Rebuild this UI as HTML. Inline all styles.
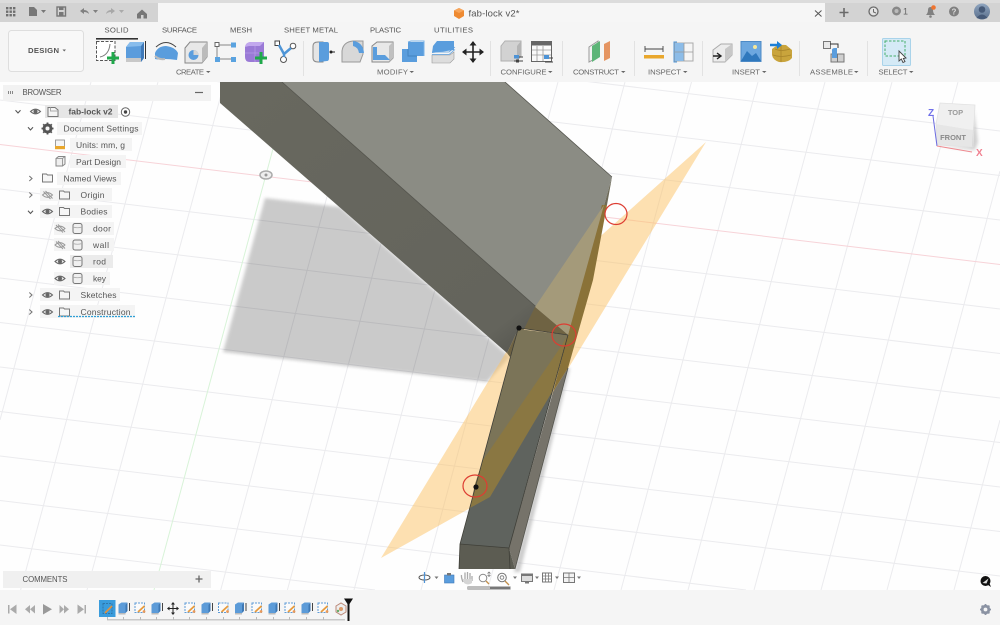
<!DOCTYPE html>
<html><head><meta charset="utf-8"><title>fab-lock v2</title>
<style>
html,body{margin:0;padding:0;width:1000px;height:625px;overflow:hidden;background:#fff}
svg{display:block;filter:blur(.3px)}
text{font-family:"Liberation Sans",sans-serif;fill:#5a5a5a}
.tab{font-size:7.7px;fill:#555}
.lab{font-size:7.7px;fill:#666}
.tr{font-size:8.5px;fill:#555}
.g line{stroke:#ebebee;stroke-width:1}
</style></head><body>
<svg width="1000" height="625" viewBox="0 0 1000 625" xmlns="http://www.w3.org/2000/svg">
<defs>
<filter id="b1" x="-10%" y="-10%" width="120%" height="120%"><feGaussianBlur stdDeviation="1.6"/></filter>
<filter id="b2" x="-10%" y="-10%" width="120%" height="120%"><feGaussianBlur stdDeviation="2.5"/></filter>
<linearGradient id="dk" x1="0" y1="0" x2="1" y2="1"><stop offset="0" stop-color="#68685f"/><stop offset=".85" stop-color="#64645c"/><stop offset="1" stop-color="#4a4a46"/></linearGradient>
<linearGradient id="av" x1="0" y1="0" x2="0" y2="1"><stop offset="0" stop-color="#8fa5c0"/><stop offset="1" stop-color="#5b708c"/></linearGradient>
<g id="eye"><path d="M-5 0Q0 -4.6 5 0Q0 4.6 -5 0Z" fill="#eee" stroke="#666" stroke-width="1.1"/><circle r="2" fill="#666"/></g>
<g id="eyeoff"><path d="M-5 0Q0 -4.6 5 0Q0 4.6 -5 0Z" fill="none" stroke="#999" stroke-width="1"/><path d="M-4 -3.5L3 4M-2 -4L5 3.5" stroke="#999" stroke-width="1" fill="none"/></g>
<g id="fold"><path d="M-5 -4H-1L0 -3H5V4H-5Z" fill="#f6f6f6" stroke="#777" stroke-width="1"/></g>
<g id="body"><rect x="-4.5" y="-5" width="9" height="10" rx="2" fill="#f0f0f0" stroke="#777" stroke-width="1"/><path d="M-4.500 -1.500Q0 0 4.500 -1.500" stroke="#aaa" fill="none" stroke-width=".8"/></g>
<path id="car" d="M-2.500 -1.200L0 1.500L2.500 -1.200" fill="none" stroke="#555" stroke-width="1.100"/>
<path id="cal" d="M-1.200 -2.500L1.500 0L-1.200 2.500" fill="none" stroke="#777" stroke-width="1.100"/>
<g id="tsk"><rect x="-5" y="-5" width="9.500" height="9.500" fill="#fafafa" stroke="#5d9bd6" stroke-width="1" stroke-dasharray="2 1"/><path d="M-2 4L4.500 -2" stroke="#e79a3c" stroke-width="1.800"/><circle cx="4" cy="3.500" r="1.400" fill="#e95"/></g>
<g id="tex"><path d="M-5 -3.500L-2 -5.500H4L2 -3.500V5H-5Z" fill="#5c9bd8"/><path d="M2 -3.500L4 -5.500V3L2 5Z" fill="#3e79b5"/><path d="M-5 5H2V6.500H-5Z" fill="#bbb"/><path d="M6 -5V3" stroke="#444" stroke-width="1"/></g>
</defs>

<!-- viewport background -->
<rect width="1000" height="625" fill="#fefefe"/>
<g class="g">
<line x1="0" y1="11" x2="1000" y2="131"/><line x1="0" y1="55.500" x2="1000" y2="175.500"/><line x1="0" y1="100" x2="1000" y2="220"/>
<line x1="0" y1="189" x2="1000" y2="309"/><line x1="0" y1="233.500" x2="1000" y2="353.500"/><line x1="0" y1="278" x2="1000" y2="398"/>
<line x1="0" y1="322.500" x2="1000" y2="442.500"/><line x1="0" y1="367" x2="1000" y2="487"/><line x1="0" y1="411.500" x2="1000" y2="531.500"/>
<line x1="0" y1="456" x2="1000" y2="576"/><line x1="0" y1="500.500" x2="746" y2="590"/><line x1="0" y1="545" x2="375" y2="590"/>
<line x1="0" y1="420" x2="91" y2="82"/><line x1="20.600" y1="590" x2="158" y2="82"/><line x1="87" y1="590" x2="224.500" y2="82"/>
<line x1="220.700" y1="590" x2="358" y2="82"/><line x1="287.400" y1="590" x2="424.600" y2="82"/><line x1="354" y1="590" x2="491" y2="82"/>
<line x1="421" y1="590" x2="558" y2="82"/><line x1="487.500" y1="590" x2="625" y2="82"/><line x1="554" y1="590" x2="691.500" y2="82"/>
<line x1="621" y1="590" x2="758" y2="82"/><line x1="688" y1="590" x2="825" y2="82"/><line x1="754" y1="590" x2="892" y2="82"/>
<line x1="821" y1="590" x2="958" y2="82"/><line x1="887" y1="590" x2="1000" y2="171"/><line x1="954" y1="590" x2="1000" y2="420"/>
</g>
<line x1="0" y1="144.500" x2="1000" y2="264.500" stroke="#f7d3d8" stroke-width="1"/>
<line x1="154" y1="590" x2="291" y2="82" stroke="#d8f3d8" stroke-width="1"/>

<!-- shadow of door -->
<path d="M265 198L340 207L510 357L487 382L223 352Z" fill="#000" opacity=".2" filter="url(#b1)"/>
<!-- origin -->
<ellipse cx="266" cy="175" rx="6" ry="4" fill="#eee" stroke="#aaa" stroke-width="1.500"/>
<circle cx="266" cy="175" r="1.500" fill="#999"/>

<!-- rod shadow -->
<path d="M570 368L520 572L514 572L566 368Z" fill="#999" opacity=".5" filter="url(#b1)"/>
<!-- orange plane -->
<path d="M706 142L548 283L381 558L490 497Z" fill="#fbc469" opacity=".52"/>

<!-- door faces -->
<path d="M282 82H505L612 177L568 335Z" fill="#8b8c84"/>
<path d="M220 82H282L568 335L519 328L507 353L220 103Z" fill="url(#dk)"/>
<path d="M282 82L568 335M505 82L612 177" stroke="#55554e" stroke-width=".8" fill="none"/>
<!-- door side strip -->
<path d="M612 177L607 205L602 205L568 335Z" fill="#6d6a58"/>
<path d="M602 205L607 205L593 280L568 368L553 392L568 335Z" fill="#8a7238"/>
<!-- plane tint over door top / dark face -->
<path d="M604 205L568 335L535 307Z" fill="#a49a7a"/>
<path d="M535 307L568 335L519 328L507 353L510 357Z" fill="#6f6343"/>

<!-- rod -->
<path d="M518 329L568 335L509 548L460 544Z" fill="#7b7458"/>
<path d="M568 335L552 392L490 497L470 508L475 484L483 460L560 348Z" fill="#8a7742"/>
<path d="M470 508L490 497L552 392L509 548L460 544Z" fill="#5f635e"/>
<path d="M553 392L568 368L515 569L509 548Z" fill="#76736a"/>
<path d="M460 544L509 548L515 569H459Z" fill="#5c5c52"/>
<path d="M518 329L460 544L459 569M509 548L568 335M460 544L509 548L510 569M519 328L568 335" stroke="#3f3f38" stroke-width=".8" fill="none"/>
<path d="M568 368L515 569" stroke="#55554e" stroke-width=".8" fill="none"/>

<!-- markers -->
<ellipse cx="616" cy="214" rx="11" ry="10.500" fill="none" stroke="#dd3d32" stroke-width="1.200"/>
<ellipse cx="564" cy="335" rx="12" ry="11" fill="none" stroke="#dd3d32" stroke-width="1.200"/>
<ellipse cx="475" cy="486" rx="12" ry="11" fill="none" stroke="#dd3d32" stroke-width="1.200"/>
<circle cx="519" cy="328" r="2.600" fill="#111"/>
<circle cx="476" cy="487" r="2.600" fill="#111"/>

<!-- viewcube -->
<path d="M939 146L975 150L978 142L974 110L970 146Z" fill="#999" opacity=".45" filter="url(#b1)"/>
<path d="M940 103L975 105L973 130L936 124Z" fill="#f0f0f0"/>
<path d="M936 124L973 130L972 147L937 145Z" fill="#e6e6e6"/>
<path d="M940 103L975 105L973 147L937 145L936 124Z" fill="none" stroke="#e2e2e2" stroke-width=".8"/>
<path d="M933 116L937 146" stroke="#6a6ae0" stroke-width="1"/>
<path d="M937 146L972 152" stroke="#ee8a90" stroke-width="1"/>
<text x="955.500" y="115" font-size="7.500" font-weight="bold" text-anchor="middle" style="fill:#9a9a9a">TOP</text>
<text x="953" y="140" font-size="7.500" font-weight="bold" text-anchor="middle" style="fill:#8a8a8a">FRONT</text>
<text x="928" y="116" font-size="10" font-weight="bold" style="fill:#7070ea">Z</text>
<text x="976" y="156" font-size="10" font-weight="bold" style="fill:#f08090">X</text>

<!-- title bar -->
<rect width="1000" height="22" fill="#d3d3d3"/>
<rect width="1000" height="3" fill="#dcdcdc"/>
<rect x="158" y="3" width="667" height="20" fill="#f6f6f6"/>
<rect y="22" width="1000" height="60" fill="#f5f5f5"/>
<!-- top-left icons -->
<g fill="#6f6f6f"><rect x="6" y="7" width="2.400" height="2.400"/><rect x="9.500" y="7" width="2.400" height="2.400"/><rect x="13" y="7" width="2.400" height="2.400"/><rect x="6" y="10.500" width="2.400" height="2.400"/><rect x="9.500" y="10.500" width="2.400" height="2.400"/><rect x="13" y="10.500" width="2.400" height="2.400"/><rect x="6" y="14" width="2.400" height="2.400"/><rect x="9.500" y="14" width="2.400" height="2.400"/><rect x="13" y="14" width="2.400" height="2.400"/></g>
<path d="M29 7H34L37 10V16H29Z" fill="#777"/>
<path d="M41 10H46L43.500 13Z" fill="#777"/>
<rect x="57" y="7" width="8.500" height="9" fill="none" stroke="#777" stroke-width="1.400"/><rect x="59" y="7" width="4.500" height="3" fill="#777"/><rect x="59" y="12" width="4.500" height="3.500" fill="#777"/>
<path d="M80 11L84 8V10Q88 10 89 14Q87 12 84 12V14Z" fill="#808080"/>
<path d="M93 10H98L95.500 13Z" fill="#808080"/>
<path d="M115 11L111 8V10Q107 10 106 14Q108 12 111 12V14Z" fill="#a8a8a8"/>
<path d="M119 10H124L121.500 13Z" fill="#aaa"/>
<path d="M137 14L142 9.500L147 14V18.500H137Z" fill="#767676"/>
<rect x="141" y="15" width="2.500" height="3.500" fill="#d3d3d3"/>
<!-- doc tab -->
<path d="M459 8L464 10.500V16L459 19L454 16V10.500Z" fill="#ee8a32"/>
<path d="M459 8L464 10.500L459 13L454 10.500Z" fill="#f7a55a"/>
<text x="468.500" y="16.500" font-size="9.500" textLength="51" style="fill:#555">fab-lock v2*</text>
<path d="M815 10.500L821.500 16.500M821.500 10.500L815 16.500" stroke="#555" stroke-width="1"/>
<!-- right icons -->
<path d="M844 8V17M839.500 12.500H848.500" stroke="#6a6a6a" stroke-width="1.600"/>
<circle cx="873.500" cy="11.500" r="4.500" fill="#e4e4e4" stroke="#6a6a6a" stroke-width="1.300"/><path d="M873.500 9V12L876 13" stroke="#6a6a6a" stroke-width="1" fill="none"/>
<circle cx="896.500" cy="11" r="4.500" fill="#888"/><circle cx="896.500" cy="11" r="2" fill="#bbb"/>
<text x="903" y="14.500" font-size="9" style="fill:#666">1</text>
<path d="M926 15Q928 13 928 10Q928 7 930.500 7Q933 7 933 10Q933 13 935 15Z" fill="#808080"/><circle cx="930.500" cy="16.500" r="1.300" fill="#808080"/><circle cx="933.500" cy="7.500" r="2.300" fill="#ee7430"/>
<circle cx="954" cy="11.500" r="5" fill="#808080"/><text x="954" y="14.500" font-size="8" font-weight="bold" text-anchor="middle" style="fill:#ddd">?</text>
<circle cx="982" cy="11.500" r="8" fill="url(#av)"/><circle cx="982" cy="9.500" r="3.300" fill="#465a78"/><path d="M976.500 18Q982 11 987.500 18Q982 20 976.500 18Z" fill="#465a78"/>

<!-- toolbar -->
<rect x="8.500" y="30.500" width="75" height="41" rx="3" fill="#f8f8f8" stroke="#dedede"/>
<text x="28" y="53" font-size="7.700" font-weight="bold" textLength="31" style="fill:#555">DESIGN</text>
<path d="M62.500 49.500H66L64.250 51.500Z" fill="#666"/>
<text class="tab" x="104.500" y="32.500" textLength="24">SOLID</text>
<text class="tab" x="162" y="32.500" textLength="35">SURFACE</text>
<text class="tab" x="230" y="32.500" textLength="22">MESH</text>
<text class="tab" x="284" y="32.500" textLength="54">SHEET METAL</text>
<text class="tab" x="370" y="32.500" textLength="31">PLASTIC</text>
<text class="tab" x="434" y="32.500" textLength="39">UTILITIES</text>
<rect x="96" y="38" width="42" height="1.600" fill="#333"/>
<g stroke="#e2e2e2" stroke-width="1"><line x1="303.500" y1="41" x2="303.500" y2="76"/><line x1="490.500" y1="41" x2="490.500" y2="76"/><line x1="562.500" y1="41" x2="562.500" y2="76"/><line x1="634.500" y1="41" x2="634.500" y2="76"/><line x1="702.500" y1="41" x2="702.500" y2="76"/><line x1="799.500" y1="41" x2="799.500" y2="76"/><line x1="867.500" y1="41" x2="867.500" y2="76"/></g>
<text class="lab" x="176" y="74.500" textLength="28">CREATE</text>
<text class="lab" x="377" y="74.500" textLength="31">MODIFY</text>
<text class="lab" x="500.500" y="74.500" textLength="46">CONFIGURE</text>
<text class="lab" x="573" y="74.500" textLength="46">CONSTRUCT</text>
<text class="lab" x="648" y="74.500" textLength="33">INSPECT</text>
<text class="lab" x="732" y="74.500" textLength="28">INSERT</text>
<text class="lab" x="810" y="74.500" textLength="43">ASSEMBLE</text>
<text class="lab" x="878.500" y="74.500" textLength="29">SELECT</text>
<g fill="#666"><path d="M206 71H210.500L208.250 73Z"/><path d="M409.500 71H414L411.750 73Z"/><path d="M548 71H552.500L550.250 73Z"/><path d="M621 71H625.500L623.250 73Z"/><path d="M683 71H687.500L685.250 73Z"/><path d="M762 71H766.500L764.250 73Z"/><path d="M854 71H858.500L856.250 73Z"/><path d="M909 71H913.500L911.250 73Z"/></g>

<!-- CREATE icons -->
<rect x="96.500" y="41.500" width="18.500" height="19" fill="#fff" stroke="#555" stroke-width="1" stroke-dasharray="3 1.500"/>
<path d="M100 57Q109 55 110 44" stroke="#777" fill="none" stroke-width="1"/>
<path d="M113 52V64M107 58H119" stroke="#1fa84a" stroke-width="3"/>
<path d="M126 47L130 42H144V58L141 62H126Z" fill="#5b9cdc"/><path d="M141 46L144 42V58L141 62Z" fill="#3f79b8"/><path d="M126 47L130 42H144L141 46Z" fill="#87bcec"/><path d="M126 58H141V62H126Z" fill="#c8c8c8"/><path d="M145.500 41V59" stroke="#333" stroke-width="1"/>
<path d="M155 53Q158 46 166 46Q175 47 178 53L177 60Q170 59 165 59Q159 60 155 59Z" fill="#5a9ddd"/><path d="M156 47Q166 38 176 47" stroke="#444" fill="none" stroke-width="1"/><path d="M155 56Q159 60 165 59" stroke="#bbb" stroke-width="2" fill="none"/>
<path d="M185 48L190 42H207V57L202 63H185Z" fill="#e8e8e8" stroke="#888" stroke-width="1"/><path d="M202 48L207 42V57L202 63Z" fill="#bbb"/><circle cx="193.500" cy="55" r="5" fill="#5a9ddd"/><path d="M193.500 50A5 5 0 0 1 198.500 55L193.500 55Z" fill="#d5d5d5"/>
<path d="M219 45H231M219 59H231M217 47V57" stroke="#888" stroke-width="1"/><rect x="215" y="42.500" width="4" height="4" fill="#fff" stroke="#666"/><rect x="231" y="42.500" width="5" height="5" fill="#5aa3e0"/><rect x="215" y="57" width="5" height="5" fill="#5aa3e0"/><rect x="231" y="57" width="5" height="5" fill="#5aa3e0"/>
<path d="M245 47Q246 42 251 42H264V58L260 62H250Q245 62 245 57Z" fill="#9a7ad6"/><path d="M245 47Q246 42 251 42H264L260 46H249Z" fill="#c2a8ee"/><path d="M255 46V62M245 53H260" stroke="#b69ae6" stroke-width=".8"/><path d="M261 52V64M255 58H267" stroke="#1fa84a" stroke-width="3"/>
<rect x="275" y="41" width="4.500" height="4.500" fill="#fff" stroke="#444"/><circle cx="293" cy="46" r="2.800" fill="#fff" stroke="#555"/><circle cx="283.500" cy="59.500" r="3" fill="#fff" stroke="#555"/><path d="M279 45L284 54L291 48M284 54V57" stroke="#4f95d6" stroke-width="2.500" fill="none"/>
<!-- MODIFY icons -->
<path d="M313 46Q313 42 318 42H323V62H318Q313 62 313 58Z" fill="#e5e5e5" stroke="#888"/><path d="M319 42H327Q329 42 329 44V58Q329 61 327 61L319 62Z" fill="#5a9ddd"/><circle cx="331" cy="52" r="1.500" fill="#222"/><path d="M331 52H335" stroke="#222"/>
<path d="M342 51Q343 42 353 41H363V54L360 62H342Z" fill="#d8d8d8" stroke="#999"/><path d="M353 41Q363 42 364 53L359 53Q358 47 353 46Z" fill="#5a9ddd"/>
<path d="M372 46L377 42H393V58L389 62H372Z" fill="#e8e8e8" stroke="#888"/><path d="M389 46L393 42V58L389 62Z" fill="#c0c0c0"/><path d="M377 47V55H385L390 60H373V47Z" fill="#5a9ddd"/>
<path d="M402 49H408V42H424V56H417V62H402Z" fill="#5a9ddd"/><path d="M408 42L411 41H424V56" fill="none" stroke="#7ab3e6"/><path d="M408 49V56H417" stroke="#4382bf" fill="none"/>
<path d="M433 46L437 41H454V50L432 53Z" fill="#5a9ddd"/><path d="M432 55H450L454 52V59L450 63H432Z" fill="#ddd" stroke="#999" stroke-width=".6"/><path d="M432 52H449L455 47M432 54.500H449L455 49.500" stroke="#5a9ddd" fill="none" stroke-width=".8"/>
<path d="M473 42V62M463 52H483" stroke="#222" stroke-width="1.600"/><path d="M473 41L476.500 45.500H469.500ZM473 63L476.500 58.500H469.500ZM462 52L466.500 48.500V55.500ZM484 52L479.500 48.500V55.500Z" fill="#222"/>
<!-- CONFIGURE -->
<path d="M501 46L505 41H521V56L517 61H501Z" fill="#d2d2d2" stroke="#b0b0b0"/><path d="M517 46L521 41V56L517 61Z" fill="#b5b5b5"/>
<path d="M514 57H523M514 61H523" stroke="#444" stroke-width="1"/><rect x="514" y="55" width="5" height="3.500" fill="#4d93d6"/><rect x="516" y="59.500" width="3" height="3" fill="#444"/>
<rect x="531.500" y="41.500" width="20" height="20" fill="#fafafa" stroke="#666"/><rect x="531.500" y="41.500" width="20" height="4" fill="#666"/>
<path d="M537 46V61M543 46V61M532 50H551M532 55H551" stroke="#999" stroke-width=".8"/>
<path d="M545 58H553M545 62H553" stroke="#444"/><rect x="544" y="55" width="5" height="4" fill="#4d93d6"/>
<!-- CONSTRUCT -->
<path d="M589 47L598 41V57L589 62Z" fill="#f2f2f2" stroke="#999"/><path d="M592 46L600 41V57L592 62Z" fill="#5db578"/><path d="M604 44L610 41V58L604 61Z" fill="#e59562"/>
<!-- INSPECT -->
<rect x="644" y="55" width="20" height="3.500" fill="#e9a72c"/><path d="M645 49H663M645 46V52M663 46V52" stroke="#444" stroke-width=".9"/>
<rect x="675" y="43" width="18" height="18" fill="#f5f5f5" stroke="#aaa"/><rect x="675" y="43" width="9" height="18" fill="#8cbce8"/><path d="M684 43V61M675 52H693" stroke="#999" stroke-width=".8"/><path d="M677 42H674V62H677" stroke="#4f95d6" fill="none"/>
<!-- INSERT -->
<path d="M713 50L721 44H732V55L725 62H713Z" fill="#ececec" stroke="#aaa"/><path d="M725 49L732 44V55L725 62Z" fill="#c8c8c8"/><path d="M713 56H720M717 53L721 56L717 59" stroke="#222" stroke-width="1.400" fill="none"/>
<rect x="741" y="41.500" width="20" height="20" fill="#6ca7df" stroke="#4d8ac6"/><circle cx="755" cy="47" r="2" fill="#f5e79a"/><path d="M741 61L747 51L752 56L756 53L761 61Z" fill="#2f78bd"/>
<path d="M772 49Q777 44 786 45L792 50V58Q788 63 779 62Q773 60 772 55Z" fill="#c9a43c"/><path d="M775 49Q781 52 790 49M773 55Q781 58 791 55M781 45V62" stroke="#a8842a" fill="none" stroke-width=".8"/><path d="M770 45H778" stroke="#1c7fd6" stroke-width="2.500"/><path d="M777 41L782 45L777 49Z" fill="#1c7fd6"/>
<!-- ASSEMBLE -->
<rect x="823.500" y="41.500" width="7" height="7" fill="#e8e8e8" stroke="#777"/><path d="M830 44H838V48" stroke="#333" fill="none"/><rect x="831" y="54" width="13" height="8" fill="#cfcfcf" stroke="#777"/><path d="M837.500 54V62" stroke="#777"/><path d="M832 50Q832 48 835 48H837V58H832Z" fill="#5a9ddd"/>
<!-- SELECT -->
<rect x="882.500" y="38.500" width="28" height="27" rx="1" fill="#d5eaf6" stroke="#a9d3ea"/>
<rect x="885" y="41" width="20" height="15" fill="none" stroke="#45ad6a" stroke-width="1" stroke-dasharray="2.500 1.500"/>
<path d="M899 51L899 61L901.300 59L903 62.500L905 61.500L903.300 58.500L906 58Z" fill="#fff" stroke="#444" stroke-width=".9"/>

<!-- browser -->
<rect x="3" y="85" width="208" height="16" fill="#f2f2f2"/>
<g fill="#888"><rect x="8" y="91" width="1" height="3"/><rect x="10" y="91" width="1" height="3"/><rect x="12" y="91" width="1" height="3"/></g>
<text x="22.500" y="95" font-size="7.800" textLength="39" style="fill:#555">BROWSER</text>
<path d="M195 92.500H203" stroke="#666" stroke-width="1.200"/>

<g fill="#f4f4f4">
<rect x="45" y="105" width="73" height="13" fill="#e6e6e6"/>
<rect x="57" y="122" width="85" height="13"/><rect x="70" y="138" width="62" height="13"/><rect x="70" y="155" width="56" height="13"/>
<rect x="57" y="172" width="64" height="13"/><rect x="40" y="188" width="72" height="13"/><rect x="40" y="205" width="72" height="13"/>
<rect x="54" y="222" width="60" height="13"/><rect x="54" y="238" width="60" height="13"/><rect x="70" y="255" width="43" height="13" fill="#ebebeb"/><rect x="54" y="272" width="56" height="13"/>
<rect x="40" y="288" width="80" height="13"/><rect x="40" y="305" width="95" height="13"/>
</g>
<use href="#car" x="18" y="111.500"/><use href="#car" x="30.500" y="128.500"/><use href="#cal" x="30.500" y="178.500"/><use href="#cal" x="30.500" y="195"/><use href="#car" x="30.500" y="212"/><use href="#cal" x="30.500" y="295"/><use href="#cal" x="30.500" y="312"/>
<use href="#eye" x="35.500" y="111.500"/>
<path d="M48 107.500H55L58 110V116.500H48Z" fill="#f4f4f4" stroke="#777"/><path d="M50.500 107.500V111H58" stroke="#aaa" fill="none"/>
<text x="68.500" y="114.500" font-size="8.500" font-weight="bold" textLength="44" style="fill:#555">fab-lock v2</text>
<circle cx="125.500" cy="112" r="4.200" fill="#fff" stroke="#666"/><circle cx="125.500" cy="112" r="1.700" fill="#444"/>

<!-- gear -->
<g transform="translate(47.500,128.500)"><circle r="3.700" fill="none" stroke="#555" stroke-width="2.600"/><path d="M0 -6V6M-6 0H6M-4.300 -4.300L4.300 4.300M4.300 -4.300L-4.300 4.300" stroke="#555" stroke-width="1.800"/><circle r="2" fill="#f5f5f5"/></g>
<text class="tr" x="63.500" y="131.500" textLength="75">Document Settings</text>
<rect x="55.500" y="140" width="9" height="6.500" fill="#f4f4f4" stroke="#888" stroke-width=".8"/><rect x="55" y="146" width="10" height="3.200" fill="#e9a72c"/>
<text class="tr" x="76" y="148" textLength="49">Units: mm, g</text>
<path d="M56 158.500L58.500 156.500H65V164L62.500 166H56Z" fill="#efefef" stroke="#888"/><path d="M56 158.500H62.500V166M62.500 158.500L65 156.500" stroke="#888" fill="none" stroke-width=".8"/>
<text class="tr" x="76" y="165" textLength="45">Part Design</text>
<use href="#fold" x="47.500" y="178"/>
<text class="tr" x="63.500" y="181.500" textLength="53">Named Views</text>
<use href="#eyeoff" x="47.500" y="195"/><use href="#fold" x="64.500" y="195"/>
<text class="tr" x="80.500" y="198" textLength="24">Origin</text>
<use href="#eye" x="47.500" y="211.500"/><use href="#fold" x="64.500" y="211.500"/>
<text class="tr" x="80.500" y="214.500" textLength="27">Bodies</text>
<use href="#eyeoff" x="60" y="228.500"/><use href="#body" x="77.500" y="228.500"/>
<text class="tr" x="93" y="231.500" textLength="18">door</text>
<use href="#eyeoff" x="60" y="245"/><use href="#body" x="77.500" y="245"/>
<text class="tr" x="93" y="248" textLength="16">wall</text>
<use href="#eye" x="60" y="261.500"/><use href="#body" x="77.500" y="261.500"/>
<text class="tr" x="93" y="264.500" textLength="13">rod</text>
<use href="#eye" x="60" y="278.500"/><use href="#body" x="77.500" y="278.500"/>
<text class="tr" x="93" y="281.500" textLength="13">key</text>
<use href="#eye" x="47.500" y="295"/><use href="#fold" x="64.500" y="295"/>
<text class="tr" x="80.500" y="298" textLength="36">Sketches</text>
<use href="#eye" x="47.500" y="312"/><use href="#fold" x="64.500" y="312"/>
<text class="tr" x="80.500" y="315" textLength="50">Construction</text>
<path d="M58 316.500H135" stroke="#2f9fd6" stroke-width="1.200" stroke-dasharray="2 1"/>

<!-- comments -->
<rect x="3" y="571" width="208" height="17" fill="#f0f0f0"/>
<text x="22.500" y="582" font-size="7.800" textLength="45" style="fill:#555">COMMENTS</text>
<path d="M199 575.500V582.500M195.500 579H202.500" stroke="#666" stroke-width="1.300"/>

<!-- nav bar -->
<ellipse cx="424.500" cy="577.500" rx="5.500" ry="2.500" fill="none" stroke="#555" stroke-width="1"/><path d="M424.500 572V583" stroke="#4d93d6" stroke-width="1.200"/>
<path d="M434.500 576.500H438.500L436.500 579Z" fill="#777"/>
<rect x="444.500" y="575" width="9.500" height="8" fill="#5a9ddd" stroke="#3f79b8" stroke-width=".6"/><rect x="447" y="573" width="4" height="2.500" fill="#777"/>
<path d="M463 582Q461 577 461.500 575M465 581V572.500M467.500 581V572M470 581V573M472 581V576" stroke="#aaa" stroke-width="1.300" fill="none"/><path d="M463 579H472V583Q468 586 464 583Z" fill="#d5d5d5"/>
<circle cx="483" cy="578" r="3.800" fill="#fff" stroke="#888"/><path d="M486 581L489 584" stroke="#c28f4a" stroke-width="1.300"/><path d="M489 572V576M487.500 573.500L489 572L490.500 573.500M487.500 575L489 576.500L490.500 575" stroke="#777" stroke-width=".7" fill="none"/>
<circle cx="502" cy="577.500" r="4.300" fill="#fff" stroke="#777"/><circle cx="502" cy="577.500" r="1.800" fill="none" stroke="#888"/><path d="M505 581L509 585" stroke="#c28f4a" stroke-width="1.300"/>
<path d="M513 576.500H517L515 579Z" fill="#777"/>
<rect x="521.500" y="574" width="11" height="7.500" fill="#ddd" stroke="#777"/><rect x="525" y="581.500" width="4" height="2" fill="#777"/><path d="M521.500 574H532.500V576H521.500Z" fill="#777"/>
<path d="M535 576.500H539L537 579Z" fill="#777"/>
<rect x="542.500" y="573" width="9" height="9" fill="#fff" stroke="#777"/><path d="M545.500 573V582M548.500 573V582M542.500 576H551.500M542.500 579H551.500" stroke="#777" stroke-width=".8"/>
<path d="M555 576.500H559L557 579Z" fill="#777"/>
<rect x="563.500" y="573" width="11" height="9.500" fill="#f2f2f2" stroke="#777"/><path d="M569 573V582.500M563.500 577.500H574.500" stroke="#777" stroke-width=".8"/>
<path d="M577 576.500H581L579 579Z" fill="#777"/>
<rect x="467" y="586" width="44" height="4" rx="1.500" fill="#bdbdbd"/>
<rect x="490" y="587" width="20" height="2" fill="#777"/>

<!-- chat -->
<circle cx="985.500" cy="581" r="5" fill="#111"/><path d="M988 585L991 587L989 582Z" fill="#111"/><path d="M982.500 583L988.500 578.500L986.500 583.500Z" fill="#ddd"/>

<!-- bottom bar -->
<rect y="590" width="1000" height="35" fill="#f5f5f5"/>
<g fill="#aaa">
<rect x="8" y="605" width="1.500" height="8.500"/><path d="M16.500 604.500V614L10 609.250Z"/>
<path d="M25 609.250L30 605V613.500ZM30 609.250L35 605V613.500Z"/>
<path d="M43 604L52 609.250L43 614.500Z" fill="#999"/>
<path d="M59.500 605L64 609.250L59.500 613.500ZM64 605L69 609.250L64 613.500Z"/>
<path d="M77.500 604.500V614L84 609.250Z"/><rect x="84.500" y="605" width="1.500" height="8.500"/>
</g>
<rect x="99" y="600" width="16.500" height="17" fill="#3a9cdc"/>
<rect x="103" y="603.500" width="9" height="10" fill="none" stroke="#2b6c9c" stroke-width=".8" stroke-dasharray="2 1"/><path d="M105 613L112 606" stroke="#e3913a" stroke-width="1.600"/>
<rect x="107" y="619" width="238" height="1.500" fill="#c9c9c9"/>
<g fill="#bbb"><rect x="107" y="617" width="1" height="3"/><rect x="123" y="617" width="1" height="3"/><rect x="140" y="617" width="1" height="3"/><rect x="156" y="617" width="1" height="3"/><rect x="173" y="617" width="1" height="3"/><rect x="189" y="617" width="1" height="3"/><rect x="206" y="617" width="1" height="3"/><rect x="223" y="617" width="1" height="3"/><rect x="239" y="617" width="1" height="3"/><rect x="256" y="617" width="1" height="3"/><rect x="273" y="617" width="1" height="3"/><rect x="289" y="617" width="1" height="3"/><rect x="306" y="617" width="1" height="3"/><rect x="323" y="617" width="1" height="3"/></g>
<use href="#tex" x="123.500" y="608"/><use href="#tsk" x="140" y="608"/><use href="#tex" x="156.500" y="608"/>
<path d="M173 603V614M167.500 608.500H178.500" stroke="#222" stroke-width="1"/><path d="M173 602L175 604.500H171ZM173 615L175 612.500H171ZM167 608.500L169.500 606.500V610.500ZM179 608.500L176.500 606.500V610.500Z" fill="#222"/>
<use href="#tsk" x="190" y="608"/><use href="#tex" x="206.500" y="608"/><use href="#tsk" x="223.500" y="608"/><use href="#tex" x="240" y="608"/><use href="#tsk" x="257" y="608"/><use href="#tex" x="273.500" y="608"/><use href="#tsk" x="290" y="608"/><use href="#tex" x="306.500" y="608"/><use href="#tsk" x="323" y="608"/>
<path d="M336 606L341 603L346 606V612L341 615L336 612Z" fill="#eee" stroke="#b87" stroke-width="1"/><circle cx="341" cy="609" r="2" fill="#d96"/><circle cx="338" cy="611" r="1.200" fill="#6a6"/>
<path d="M344 598.500H353L349.500 604V621H347.500V604Z" fill="#111"/>
<g transform="translate(985.500,609.500)"><circle r="3.500" fill="none" stroke="#8b93a3" stroke-width="2.400"/><path d="M0 -5.500V5.500M-5.500 0H5.500M-3.900 -3.900L3.900 3.900M3.900 -3.900L-3.900 3.900" stroke="#8b93a3" stroke-width="1.700"/><circle r="1.900" fill="#f5f5f5"/></g>
</svg>
</body></html>
